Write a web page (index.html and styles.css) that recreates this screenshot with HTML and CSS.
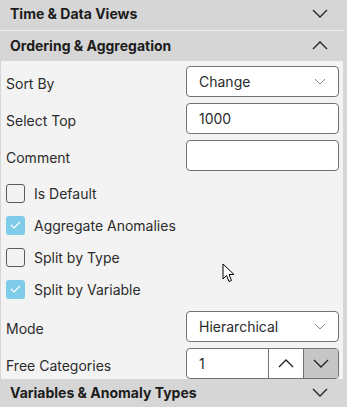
FILE: index.html
```html
<!DOCTYPE html>
<html lang="en">
<head>
  <meta charset="UTF-8" />
  <title>Ordering &amp; Aggregation</title>
  <link rel="stylesheet" href="styles.css">
</head>
<body>
  <div class="section-head first">
    <span>Time &amp; Data Views</span>
    <svg class="chev" width="16" height="9" viewBox="0 0 16 9"><path d="M1 1 L8 8 L15 1" /></svg>
  </div>
  <div class="section-head">
    <span>Ordering &amp; Aggregation</span>
    <svg class="chev" width="16" height="9" viewBox="0 0 16 9"><path d="M1 8 L8 1 L15 8" /></svg>
  </div>

  <div class="content">
    <div class="field">
      <label>Sort By</label>
      <div class="box select">
        <span>Change</span>
        <svg width="12" height="7" viewBox="0 0 12 7"><path d="M1 1 L6 6 L11 1" /></svg>
      </div>
    </div>
    <div class="field">
      <label>Select Top</label>
      <div class="box"><span>1000</span></div>
    </div>
    <div class="field">
      <label>Comment</label>
      <div class="box"></div>
    </div>

    <div class="checks">
      <div class="check"><span class="cb"></span>Is Default</div>
      <div class="check"><span class="cb on"><svg width="11" height="8" viewBox="0 0 11 8"><path d="M1 4 L4 7 L10 1" /></svg></span>Aggregate Anomalies</div>
      <div class="check"><span class="cb"></span>Split by Type</div>
      <div class="check"><span class="cb on"><svg width="11" height="8" viewBox="0 0 11 8"><path d="M1 4 L4 7 L10 1" /></svg></span>Split by Variable</div>
    </div>

    <div class="field">
      <label>Mode</label>
      <div class="box select">
        <span>Hierarchical</span>
        <svg width="12" height="7" viewBox="0 0 12 7"><path d="M1 1 L6 6 L11 1" /></svg>
      </div>
    </div>
    <div class="field">
      <label>Free Categories</label>
      <div class="box spinner">
        <span class="spin-val">1</span>
        <span class="spin-btn"><svg width="16" height="9" viewBox="0 0 16 9"><path d="M1 8 L8 1 L15 8" /></svg></span>
        <span class="spin-btn down"><svg width="16" height="9" viewBox="0 0 16 9"><path d="M1 1 L8 8 L15 1" /></svg></span>
      </div>
    </div>

    <svg class="cursor" width="14" height="20" viewBox="0 0 14 20"><path d="M1 1 L1 16 L4.5 12.5 L7 18.5 L9.5 17.5 L7 11.5 L12 11.5 Z" /></svg>
  </div>

  <div class="section-head last">
    <span>Variables &amp; Anomaly Types</span>
    <svg class="chev" width="16" height="9" viewBox="0 0 16 9"><path d="M1 1 L8 8 L15 1" /></svg>
  </div>
</body>
</html>
```

FILE: styles.css
```css
body {
  margin: 0;
  width: 347px;
  height: 407px;
  overflow: hidden;
  background: #d6d6d6;
  font-family: Inter, "Noto Sans", sans-serif;
  color: #2b2b2b;
}

.section-head {
  box-sizing: border-box;
  height: 30px;
  display: flex;
  align-items: center;
  justify-content: space-between;
  padding: 0 19px 2px 10px;
  background: #d6d6d6;
  font-size: 14px;
  font-weight: 700;
  color: #1c1c1c;
}

.section-head.first {
  height: 31px;
  border-bottom: 1px solid #eeeeee;
  margin-right: 3px;
  padding: 0 16px 4px 10px;
}

.section-head.last {
  height: 28px;
  padding-bottom: 1px;
}

.chev path {
  fill: none;
  stroke: #222;
  stroke-width: 1.3;
}

.content {
  position: relative;
  width: 342px;
  margin-left: 1px;
  background: #f3f3f3;
  padding: 5px 0 0;
  display: flex;
  flex-direction: column;
  gap: 6px;
  font-size: 14px;
}

.field {
  display: flex;
  align-items: center;
  justify-content: space-between;
  padding-left: 5px;
  padding-right: 4px;
}

.field label {
  padding-top: 3px;
}

.box {
  box-sizing: border-box;
  width: 153px;
  height: 31px;
  border: 1px solid #727272;
  border-radius: 4px;
  background: #ffffff;
  display: flex;
  align-items: center;
  padding: 0 12px;
  color: #2b2b2b;
}

.select {
  justify-content: space-between;
}

.select svg path {
  fill: none;
  stroke: #8a8a8a;
  stroke-width: 1;
}

.spinner {
  padding: 0;
  overflow: hidden;
}

.spin-val {
  flex: 1;
  padding-left: 12px;
}

.spin-btn {
  width: 34px;
  height: 100%;
  border-left: 1px solid #727272;
  display: flex;
  align-items: center;
  justify-content: center;
}

.spin-btn.down {
  background: #c6c6c6;
}

.spin-btn path {
  fill: none;
  stroke: #222;
  stroke-width: 1.3;
}

.checks {
  display: flex;
  flex-direction: column;
}

.check {
  height: 32px;
  display: flex;
  align-items: center;
  gap: 9px;
  padding-left: 5px;
}

.cb {
  box-sizing: border-box;
  width: 19px;
  height: 19px;
  border: 1px solid #5a5a5a;
  border-radius: 3px;
  display: flex;
  align-items: center;
  justify-content: center;
}

.cb.on {
  border: none;
  background: #7fcbea;
}

.cb path {
  fill: none;
  stroke: #ffffff;
  stroke-width: 1.2;
}

.cursor {
  position: absolute;
  left: 221px;
  top: 202px;
}

.cursor path {
  fill: #ffffff;
  stroke: #000000;
  stroke-width: 1;
}
```
